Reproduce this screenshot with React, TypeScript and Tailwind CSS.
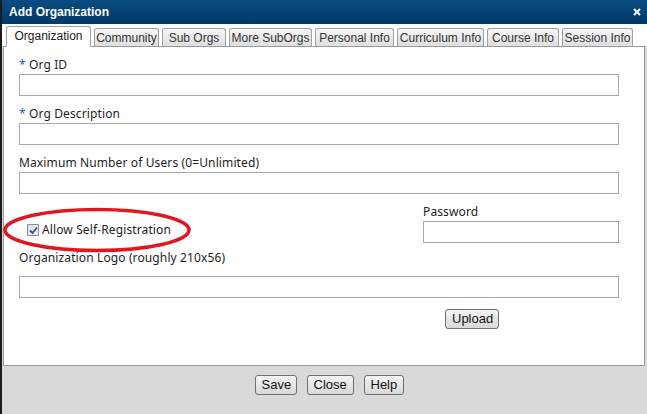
const tabs = [
  { label: "Organization", w: "w-[85px]", active: true },
  { label: "Community", w: "w-[65px]" },
  { label: "Sub Orgs", w: "w-[64px]" },
  { label: "More SubOrgs", w: "w-[83px]" },
  { label: "Personal Info", w: "w-[79px]" },
  { label: "Curriculum Info", w: "w-[87px]" },
  { label: "Course Info", w: "w-[72px]" },
  { label: "Session Info", w: "w-[71px]" },
];

function TextBox({ className = "" }: { className?: string }) {
  return <div className={`h-[22px] border border-[#a9a9a9] bg-white ${className}`} />;
}

function Label({ text, required }: { text: string; required?: boolean }) {
  return (
    <div className="h-[16px] text-[12px] leading-[16px] tracking-[0.12px] text-[#1e1e1e]">
      {required && <span className="text-[#2a5db0]">* </span>}
      {text}
    </div>
  );
}

function Button({ children, className = "" }: { children: React.ReactNode; className?: string }) {
  return (
    <button
      className={`h-[20px] rounded-[3px] border border-[#707070] bg-gradient-to-b from-[#f4f4f4] to-[#d8d8d8] px-[6px] font-['Liberation_Sans',Arial,sans-serif] text-[13px] leading-[18px] text-[#111] ${className}`}
    >
      {children}
    </button>
  );
}

export default function App() {
  return (
    <div className="relative flex h-[414px] w-[647px] flex-col overflow-hidden border-l-2 border-[#1c1c1c] bg-[#d9d9d9] font-['Noto_Sans',sans-serif]">
      {/* title bar */}
      <div className="flex h-[24px] shrink-0 items-center justify-between bg-gradient-to-b from-[#0b4c80] to-[#003a69] pl-[7px] pr-[5px] font-['Liberation_Sans',Arial,sans-serif] text-[12px] font-bold text-white">
        <span>Add Organization</span>
        <svg width="8" height="8" viewBox="0 0 8 8" className="mr-[1px]">
          <path d="M1 1L7 7M7 1L1 7" stroke="white" strokeWidth="2" />
        </svg>
      </div>

      {/* tabs */}
      <div className="flex h-[22px] shrink-0 items-end gap-[3px] bg-white pl-[4px]">
        {tabs.map((t) => (
          <div
            key={t.label}
            className={`${t.w} flex shrink-0 items-center justify-center rounded-t-[3px] border border-[#a0a0a0] font-['Liberation_Sans',Arial,sans-serif] text-[12px] ${
              t.active
                ? "relative z-10 -mb-px h-[21px] border-b-white bg-white pb-[1px] text-[#222]"
                : "h-[18px] border-b-0 bg-gradient-to-b from-[#f7f7f7] to-[#dedede] text-[#333]"
            }`}
          >
            {t.label}
          </div>
        ))}
      </div>

      {/* panel */}
      <div className="ml-[1px] mr-[2px] flex h-[320px] shrink-0 flex-col border border-[#9a9a9a] bg-white pl-[15px] pr-[25px] pt-[10px]">
        <Label text="Org ID" required />
        <TextBox className="mt-[1px]" />
        <div className="mt-[10px]">
          <Label text="Org Description" required />
        </div>
        <TextBox className="mt-[1px]" />
        <div className="mt-[10px]">
          <Label text="Maximum Number of Users (0=Unlimited)" />
        </div>
        <TextBox className="mt-[1px]" />

        <div className="mt-[10px] flex items-end justify-between">
          <div className="mb-[5px] ml-[8px] flex items-center gap-[3px] text-[12px] leading-[16px] tracking-[0.12px] text-[#1e1e1e]">
            <span className="flex h-[12px] w-[12px] items-center justify-center border border-[#8e8f8f] bg-gradient-to-br from-[#d9dfe8] to-[#f2f4f7]">
              <svg width="9" height="9" viewBox="0 0 9 9">
                <path d="M1 4.5L3.5 7L8 1.5" fill="none" stroke="#2b4d9c" strokeWidth="1.8" />
              </svg>
            </span>
            <span>Allow Self-Registration</span>
          </div>
          <div className="flex w-[196px] flex-col">
            <Label text="Password" />
            <TextBox className="mt-[1px]" />
          </div>
        </div>

        <div className="mt-[7px]">
          <Label text="Organization Logo (roughly 210x56)" />
        </div>
        <TextBox className="mt-[10px]" />
        <div className="mt-[7px] pl-[426px]">
          <Button className="w-[54px] px-0">Upload</Button>
        </div>
      </div>

      {/* footer */}
      <div className="flex flex-1 justify-center gap-[10px] pl-[9px] pt-[9px]">
        <Button className="w-[42px] px-0">Save</Button>
        <Button className="w-[47px] px-0">Close</Button>
        <Button className="w-[40px] px-0">Help</Button>
      </div>

      {/* annotation */}
      <svg
        className="pointer-events-none absolute left-0 top-[207px]"
        width="190"
        height="46"
        viewBox="0 0 190 46"
      >
        <ellipse cx="95" cy="23" rx="92" ry="20.5" fill="none" stroke="#e3161f" strokeWidth="3.5" />
      </svg>
    </div>
  );
}
